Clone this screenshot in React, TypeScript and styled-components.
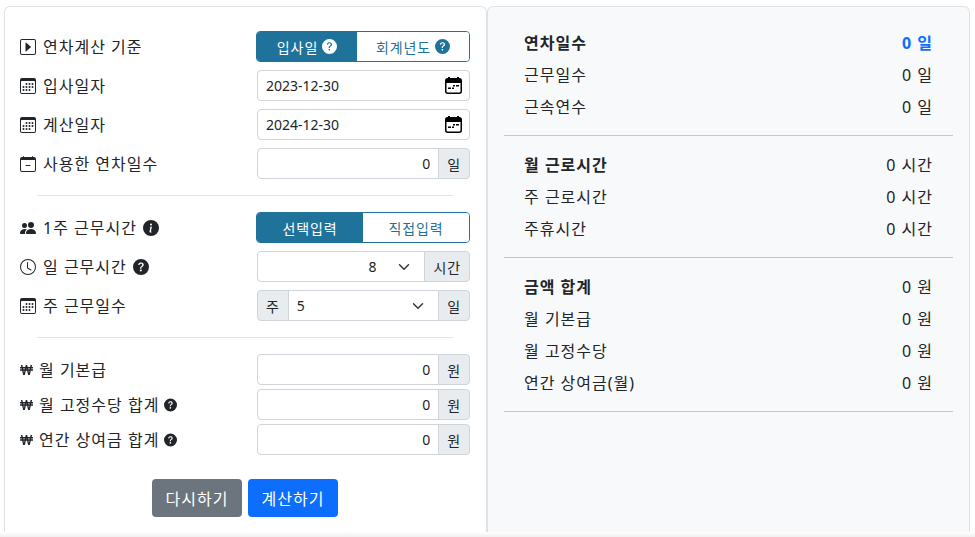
import React from 'react';
import styled, { createGlobalStyle } from 'styled-components';
import {
  BsCalendar3,
  BsCalendarMinus,
  BsCaretRightSquare,
  BsClock,
  BsInfoCircleFill,
  BsPeopleFill,
  BsQuestionCircleFill,
} from 'react-icons/bs';
import { FaWonSign } from 'react-icons/fa';

const GlobalStyle = createGlobalStyle`
  html, body {
    margin: 0;
    padding: 0;
    background: #fff;
    overflow: hidden;
  }
  * {
    box-sizing: border-box;
  }
  body {
    font-family: "Noto Sans", "Noto Sans CJK KR", sans-serif;
    font-size: 16px;
    color: #212529;
  }
`;

const Page = styled.div`
  display: grid;
  grid-template-columns: 483px 483px;
  height: 526px;
  margin: 6px 0 0 4px;
`;

const BottomShade = styled.div`
  height: 5px;
  background: linear-gradient(#ffffff, #f0f0f0);
`;

const FormCard = styled.div`
  border: 1px solid #dee2e6;
  border-bottom: 0;
  border-radius: 6px 6px 0 0;
  padding: 24px 16px 0 15px;
  background: #fff;
`;

const ResultCard = styled.div`
  border: 1px solid #dee2e6;
  border-bottom: 0;
  border-radius: 6px 6px 0 0;
  padding: 19px 16px 0 16px;
  background: #f8f9fa;
`;

const Row = styled.div<{ $mb?: number }>`
  display: grid;
  grid-template-columns: 1fr 214px;
  align-items: center;
  height: 31px;
  margin-bottom: ${(p) => p.$mb ?? 8}px;
`;

const Label = styled.div<{ $won?: boolean }>`
  display: flex;
  align-items: center;
  gap: ${(p) => (p.$won ? 6 : 7)}px;
  font-size: 16px;
  letter-spacing: 1px;
  line-height: 1;
  white-space: nowrap;
  svg {
    flex: none;
    font-size: 16px;
    width: ${(p) => (p.$won ? '13px' : '16px')};
  }
`;

const HelpIcon = styled.span`
  display: inline-flex;
  margin-left: -1px;
  color: #212529;
`;

const Divider = styled.hr`
  border: 0;
  border-top: 1px solid #e2e3e5;
  margin: 16px 17px 16px 17px;
`;

const Toggle = styled.div`
  display: flex;
  height: 31px;
  border: 1px solid #1f7299;
  border-radius: 4px;
  overflow: hidden;
`;

const ToggleItem = styled.div<{ $active?: boolean; $grow: number }>`
  flex: ${(p) => p.$grow} 0 0;
  display: flex;
  align-items: center;
  justify-content: center;
  gap: 4px;
  font-size: 14px;
  letter-spacing: 0.9px;
  background: ${(p) => (p.$active ? '#1f7299' : '#fff')};
  color: ${(p) => (p.$active ? '#fff' : '#1f7299')};
  svg {
    font-size: 15px;
  }
`;

const InputGroup = styled.div`
  position: relative;
  display: flex;
  height: 31px;
  margin-left: 1px;
`;

const FieldBase = `
  min-width: 0;
  height: 31px;
  border: 1px solid #ced4da;
  font-family: inherit;
  font-size: 14px;
  color: #212529;
  background-color: #fff;
  outline: none;
`;

const TextField = styled.input`
  ${FieldBase}
  flex: 1;
  border-radius: 4px 0 0 4px;
  padding: 0 8px;
  text-align: right;
`;

const DateField = styled.input`
  ${FieldBase}
  width: 100%;
  border-radius: 4px;
  padding: 0 8px;
`;

const DateIcon = styled.svg`
  position: absolute;
  right: 8px;
  top: 7px;
  width: 17px;
  height: 17px;
  pointer-events: none;
`;

const SelectField = styled.select<{ $alignRight?: boolean; $square?: boolean }>`
  ${FieldBase}
  flex: 1;
  appearance: none;
  padding: 0 ${(p) => (p.$alignRight ? 48 : 36)}px 0 8px;
  text-align: ${(p) => (p.$alignRight ? 'right' : 'left')};
  border-radius: ${(p) => (p.$square ? '0' : '4px 0 0 4px')};
  background-image: url("data:image/svg+xml,%3csvg xmlns='http://www.w3.org/2000/svg' viewBox='0 0 16 16'%3e%3cpath fill='none' stroke='%23343a40' stroke-linecap='round' stroke-linejoin='round' stroke-width='2' d='m2 5 6 6 6-6'/%3e%3c/svg%3e");
  background-repeat: no-repeat;
  background-position: right 12px center;
  background-size: 16px 12px;
`;

const Addon = styled.span<{ $side?: 'left' | 'right' }>`
  flex: none;
  display: flex;
  align-items: center;
  justify-content: center;
  padding: 0 8px;
  height: 31px;
  font-size: 14px;
  letter-spacing: 0.9px;
  background: #e9ecef;
  border: 1px solid #ced4da;
  margin-left: ${(p) => (p.$side === 'left' ? '0' : '-1px')};
  margin-right: ${(p) => (p.$side === 'left' ? '-1px' : '0')};
  border-radius: ${(p) => (p.$side === 'left' ? '4px 0 0 4px' : '0 4px 4px 0')};
`;

const Actions = styled.div`
  display: flex;
  justify-content: center;
  gap: 6px;
  margin-top: 24px;
`;

const Button = styled.button<{ $color: string }>`
  width: 90px;
  height: 38px;
  border: 0;
  border-radius: 4px;
  color: #fff;
  background: ${(p) => p.$color};
  font-family: inherit;
  font-size: 16px;
  letter-spacing: 1px;
`;

const Section = styled.div`
  padding-bottom: 13px;
  margin-bottom: 12px;
  border-bottom: 1px solid #c6c7c8;
`;

const ResultRow = styled.div<{ $strong?: boolean; $accent?: boolean }>`
  display: flex;
  justify-content: space-between;
  align-items: center;
  height: 32px;
  padding: 0 20px;
  font-size: 16px;
  letter-spacing: 1px;
  font-weight: ${(p) => (p.$strong ? 700 : 400)};
  span {
    font-weight: ${(p) => (p.$accent ? 700 : 400)};
    color: ${(p) => (p.$accent ? '#0d6efd' : 'inherit')};
  }
`;

const results = [
  [
    { name: '연차일수', value: '0 일', accent: true },
    { name: '근무일수', value: '0 일' },
    { name: '근속연수', value: '0 일' },
  ],
  [
    { name: '월 근로시간', value: '0 시간', strongName: true },
    { name: '주 근로시간', value: '0 시간' },
    { name: '주휴시간', value: '0 시간' },
  ],
  [
    { name: '금액 합계', value: '0 원', strongName: true },
    { name: '월 기본급', value: '0 원' },
    { name: '월 고정수당', value: '0 원' },
    { name: '연간 상여금(월)', value: '0 원' },
  ],
];

const CalendarGlyph = () => (
  <DateIcon viewBox="0 0 17 17">
    <rect x="0.75" y="1.75" width="15.5" height="14.5" rx="2" fill="#fff" stroke="#000" strokeWidth="1.5" />
    <rect x="1" y="2" width="15" height="4" fill="#000" />
    <rect x="3" y="0" width="2" height="3" fill="#000" />
    <rect x="12" y="0" width="2" height="3" fill="#000" />
    <rect x="8" y="8" width="2" height="1.5" fill="#000" />
    <rect x="11" y="8" width="3" height="1.5" fill="#000" />
    <rect x="3" y="10.5" width="3" height="1.5" fill="#000" />
    <rect x="7" y="10.5" width="2" height="1.5" fill="#000" />
  </DateIcon>
);

export default function App() {
  return (
    <>
      <GlobalStyle />
      <Page>
        <FormCard>
          <Row>
            <Label>
              <BsCaretRightSquare />
              연차계산 기준
            </Label>
            <Toggle>
              <ToggleItem $active $grow={100}>
                입사일 <BsQuestionCircleFill />
              </ToggleItem>
              <ToggleItem $grow={112}>
                회계년도 <BsQuestionCircleFill />
              </ToggleItem>
            </Toggle>
          </Row>
          <Row>
            <Label>
              <BsCalendar3 />
              입사일자
            </Label>
            <InputGroup>
              <DateField defaultValue="2023-12-30" />
              <CalendarGlyph />
            </InputGroup>
          </Row>
          <Row>
            <Label>
              <BsCalendar3 />
              계산일자
            </Label>
            <InputGroup>
              <DateField defaultValue="2024-12-30" />
              <CalendarGlyph />
            </InputGroup>
          </Row>
          <Row $mb={0}>
            <Label>
              <BsCalendarMinus />
              사용한 연차일수
            </Label>
            <InputGroup>
              <TextField defaultValue="0" />
              <Addon>일</Addon>
            </InputGroup>
          </Row>
          <Divider />
          <Row>
            <Label>
              <BsPeopleFill />
              1주 근무시간
              <HelpIcon>
                <BsInfoCircleFill />
              </HelpIcon>
            </Label>
            <Toggle>
              <ToggleItem $active $grow={106}>
                선택입력
              </ToggleItem>
              <ToggleItem $grow={106}>직접입력</ToggleItem>
            </Toggle>
          </Row>
          <Row>
            <Label>
              <BsClock />
              일 근무시간
              <HelpIcon>
                <BsQuestionCircleFill />
              </HelpIcon>
            </Label>
            <InputGroup>
              <SelectField defaultValue="8" $alignRight>
                <option>8</option>
              </SelectField>
              <Addon>시간</Addon>
            </InputGroup>
          </Row>
          <Row $mb={0}>
            <Label>
              <BsCalendar3 />
              주 근무일수
            </Label>
            <InputGroup>
              <Addon $side="left">주</Addon>
              <SelectField defaultValue="5" $square>
                <option>5</option>
              </SelectField>
              <Addon>일</Addon>
            </InputGroup>
          </Row>
          <Divider />
          <Row $mb={4}>
            <Label $won>
              <FaWonSign />월 기본급
            </Label>
            <InputGroup>
              <TextField defaultValue="0" />
              <Addon>원</Addon>
            </InputGroup>
          </Row>
          <Row $mb={4}>
            <Label $won>
              <FaWonSign />월 고정수당 합계
              <HelpIcon>
                <BsQuestionCircleFill />
              </HelpIcon>
            </Label>
            <InputGroup>
              <TextField defaultValue="0" />
              <Addon>원</Addon>
            </InputGroup>
          </Row>
          <Row $mb={0}>
            <Label $won>
              <FaWonSign />연간 상여금 합계
              <HelpIcon>
                <BsQuestionCircleFill />
              </HelpIcon>
            </Label>
            <InputGroup>
              <TextField defaultValue="0" />
              <Addon>원</Addon>
            </InputGroup>
          </Row>
          <Actions>
            <Button $color="#6c757d">다시하기</Button>
            <Button $color="#0d6efd">계산하기</Button>
          </Actions>
        </FormCard>
        <ResultCard>
          {results.map((section, i) => (
            <Section key={i}>
              {section.map((row) => (
                <ResultRow
                  key={row.name}
                  $strong={row.accent || row.strongName}
                  $accent={row.accent}
                >
                  <div>{row.name}</div>
                  <span>{row.value}</span>
                </ResultRow>
              ))}
            </Section>
          ))}
        </ResultCard>
      </Page>
      <BottomShade />
    </>
  );
}
